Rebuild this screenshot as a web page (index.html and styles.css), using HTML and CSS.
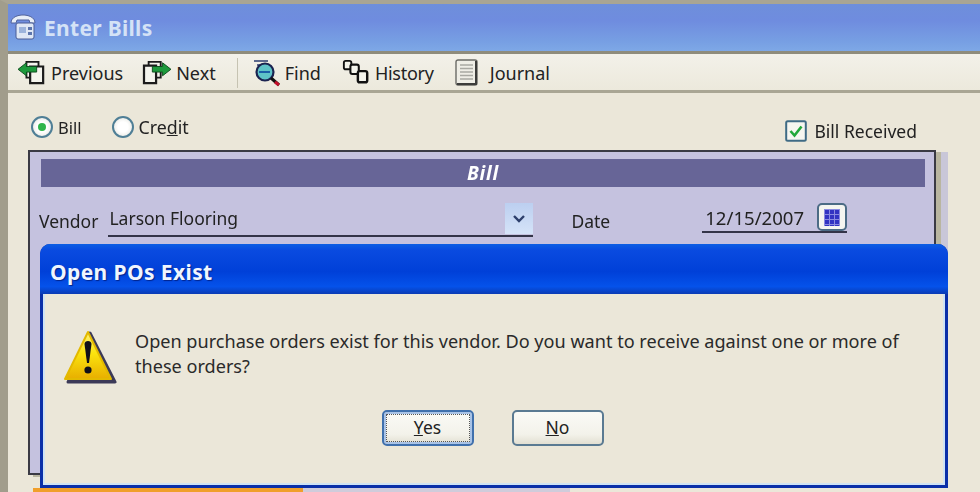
FILE: index.html
```html
<!DOCTYPE html>
<html lang="en">
<head>
<meta charset="utf-8">
<title>Enter Bills</title>
<link rel="stylesheet" href="styles.css">
</head>
<body>
<div class="window">
  <header class="titlebar">
    <svg class="title-icon" viewBox="0 0 30 30" width="30" height="30">
      <path d="M3 11 C3 5 10 3 15 3 C20 3 27 5 27 11 L22 11 L21 8 L9 8 L8 11 Z" fill="#e8eef8" stroke="#51639c" stroke-width="1"/>
      <rect x="8" y="11" width="18" height="16" rx="2" fill="#dfe7f5" stroke="#4a5c96"/>
      <rect x="11" y="15" width="7" height="6" fill="#9db4dc"/>
      <rect x="20" y="15" width="4" height="3" fill="#5c74ac"/>
      <rect x="20" y="20" width="4" height="3" fill="#5c74ac"/>
    </svg>
    <span class="title-text">Enter Bills</span>
  </header>
  <nav class="toolbar">
    <div class="tool tool-prev">
      <svg viewBox="0 0 32 28" width="30" height="26">
        <path d="M10 2 H23 V19 H10 Z" fill="#f5f5ee" stroke="#1c1c1c" stroke-width="2"/>
        <path d="M14 7 H28 V25 H14 Z" fill="#f5f5ee" stroke="#1c1c1c" stroke-width="2.4"/>
        <path d="M1 10 L10 3 V7 H21 V13 H10 V17 Z" fill="#1d9a3c" stroke="#0c4a1c" stroke-width="1"/>
      </svg>
      <span>Previous</span>
    </div>
    <div class="tool tool-next">
      <svg viewBox="0 0 32 28" width="30" height="26">
        <path d="M7 2 H20 V19 H7 Z" fill="#f5f5ee" stroke="#1c1c1c" stroke-width="2"/>
        <path d="M2 6 H15 V25 H2 Z" fill="#f5f5ee" stroke="#1c1c1c" stroke-width="2.4"/>
        <path d="M31 10 L22 3 V7 H11 V13 H22 V17 Z" fill="#1d9a3c" stroke="#0c4a1c" stroke-width="1"/>
      </svg>
      <span>Next</span>
    </div>
    <div class="tool-sep"></div>
    <div class="tool tool-find">
      <svg viewBox="0 0 30 30" width="30" height="30">
        <path d="M2 3 H16 M5 7 H12" stroke="#2b3c70" stroke-width="1.5"/>
        <circle cx="13" cy="14" r="8.5" fill="#5fc3c8" stroke="#1b2350" stroke-width="2.2"/>
        <path d="M7 14 H18" stroke="#1b5fa8" stroke-width="2"/>
        <path d="M19 20 L27 27" stroke="#111" stroke-width="3"/>
        <path d="M23 24 L27 27" stroke="#c4102a" stroke-width="3"/>
      </svg>
      <span>Find</span>
    </div>
    <div class="tool tool-history">
      <svg viewBox="0 0 30 30" width="28" height="28">
        <rect x="2" y="2" width="8" height="9" rx="2" fill="#f4f4ec" stroke="#111" stroke-width="2"/>
        <rect x="9" y="6" width="9" height="10" rx="2" fill="#f4f4ec" stroke="#111" stroke-width="2.2"/>
        <rect x="17" y="13" width="10" height="12" rx="2" fill="#f4f4ec" stroke="#111" stroke-width="2.6"/>
      </svg>
      <span>History</span>
    </div>
    <div class="tool tool-journal">
      <svg viewBox="0 0 24 28" width="24" height="28">
        <rect x="1" y="1" width="21" height="25" rx="2" fill="#efeee6" stroke="#6b6b66" stroke-width="1.4"/>
        <path d="M21 2 V25 H2" fill="none" stroke="#3c3c3a" stroke-width="2"/>
        <path d="M5 6 H18 M5 9.5 H18 M5 13 H18 M5 16.5 H18 M5 20 H18" stroke="#a9a9a2" stroke-width="1.5"/>
      </svg>
      <span>Journal</span>
    </div>
  </nav>
  <main class="content">
    <div class="options">
      <label class="radio radio-on"><span class="radio-dot"></span><span>Bill</span></label>
      <label class="radio"><span class="radio-dot"></span><span class="credit">Cre<u>d</u>it</span></label>
      <label class="received">
        <svg viewBox="0 0 22 22" width="22" height="22">
          <rect x="1.2" y="1.2" width="19.6" height="19.6" rx="1.5" fill="#f6f6f0" stroke="#3f6b85" stroke-width="2"/>
          <path d="M5.5 11 L9.5 15.5 L16.5 6.5" fill="none" stroke="#22a83a" stroke-width="2.6"/>
        </svg>
        <span>Bill Received</span>
      </label>
    </div>
    <section class="panel">
      <h2 class="panel-head">Bill</h2>
      <div class="fields">
        <span class="vendor-label">Vendor</span>
        <div class="vendor-field">
          <span>Larson Flooring</span>
          <span class="dropdown">
            <svg viewBox="0 0 14 10" width="14" height="10"><path d="M2 2 L7 7 L12 2" fill="none" stroke="#2d3f6c" stroke-width="2.4"/></svg>
          </span>
        </div>
        <span class="date-label">Date</span>
        <div class="date-field">
          <span>12/15/2007</span>
          <span class="calendar"><span class="calendar-grid"></span></span>
        </div>
      </div>
    </section>
    <div class="task-strip"></div>
  </main>
  <section class="dialog">
    <h1 class="dialog-title">Open POs Exist</h1>
    <div class="dialog-body">
      <div class="message">
        <svg class="warning" viewBox="0 0 54 56" width="54" height="56">
          <defs>
            <linearGradient id="warnFill" x1="0" y1="0" x2="0" y2="1">
              <stop offset="0" stop-color="#fff27a"/>
              <stop offset="0.45" stop-color="#fbe40e"/>
              <stop offset="1" stop-color="#e8ae00"/>
            </linearGradient>
          </defs>
          <path d="M27 3 L52 52 H5 Z" fill="#3c3a58" stroke="#3c3a58" stroke-width="3" stroke-linejoin="round"/>
          <path d="M25 2 L48 49 H2 Z" fill="url(#warnFill)" stroke="#e3b900" stroke-width="2" stroke-linejoin="round"/>
          <path d="M21.5 14 C21.5 10 28.5 10 28.5 14 L26 33 H24 Z" fill="#10101a"/>
          <circle cx="25" cy="40" r="3.6" fill="#10101a"/>
        </svg>
        <p>Open purchase orders exist for this vendor. Do you want to receive against one or more of these orders?</p>
      </div>
      <div class="actions">
        <button class="btn btn-default" type="button"><u>Y</u>es</button>
        <button class="btn" type="button"><u>N</u>o</button>
      </div>
    </div>
  </section>
</div>
</body>
</html>
```

FILE: styles.css
```css
* { box-sizing: border-box; }
html, body { margin: 0; padding: 0; }
body { width: 980px; height: 492px; overflow: hidden; background: #ebe7d9; font-family: "Noto Sans", "Open Sans", sans-serif; color: #222; }

.window { position: relative; width: 980px; height: 492px; overflow: hidden; display: flex; flex-direction: column; border-top: 4px solid #a9a593; border-left: 8px solid #a19d8c; filter: blur(0.65px); }

.titlebar { height: 50px; flex: none; display: flex; align-items: center; gap: 6px; background: linear-gradient(#6e8fdb 0%, #6f8cdf 35%, #779fe3 80%, #7ea8e6 100%); border-bottom: 3px solid #8f8c7c; }
.title-icon { margin-top: -2px; }
.title-text { font-size: 21px; font-weight: 700; color: #d4e2f6; letter-spacing: 0.3px; }

.toolbar { height: 39px; flex: none; display: flex; align-items: center; background: linear-gradient(#f3f1e9, #ece9dc); border-bottom: 3px solid #a9a694; padding: 1px 0 0 9px; font-size: 18px; color: #222; }
.tool { display: flex; align-items: center; gap: 4px; }
.tool-next { margin-left: 19px; }
.tool-sep { width: 1px; height: 30px; background: #c6c3b2; margin: 0 14px 0 21px; }
.tool-find { gap: 3px; }
.tool-history { margin-left: 21px; gap: 5px; }
.tool-history span { letter-spacing: -0.25px; }
.tool-journal { margin-left: 21px; gap: 11px; }

.content { flex: 1; position: relative; display: flex; flex-direction: column; padding-left: 20px; }
.options { height: 57px; width: 889px; flex: none; display: flex; align-items: flex-start; padding: 21px 0 0 1px; font-size: 16.5px; }
.radio { display: flex; align-items: center; gap: 5px; height: 26px; margin-right: 30px; }
.credit { font-size: 17.8px; }
.radio-dot { width: 22px; height: 22px; border-radius: 50%; border: 2px solid #4f7f96; background: radial-gradient(#fff 40%, #e0e0d8); display: flex; align-items: center; justify-content: center; }
.radio-on .radio-dot::after { content: ""; width: 8px; height: 8px; border-radius: 50%; background: #2fb54a; }
.radio-on { margin-left: 2px; }
.received { margin-left: auto; margin-top: 4px; display: flex; align-items: center; gap: 7px; height: 26px; font-size: 17.5px; }

.panel { width: 908px; height: 325px; flex: none; background: #c5c2df; border: 2px solid #3a3a44; padding: 7px 0 0 11px; box-shadow: 5px 2px 0 #b9b6a0, 12px 2px 0 #c9c7d8, 12px 12px 0 #c9c7d8; }
.panel-head { margin: 0; height: 28px; width: 884px; padding-top: 1px; background: #676597; color: #fff; font-size: 19px; font-weight: 700; font-style: italic; text-align: center; line-height: 27px; letter-spacing: 0.8px; }
.fields { display: flex; align-items: flex-start; padding-top: 15px; font-size: 17.5px; }
.vendor-label { margin: 7px 10px 0 -2px; }
.vendor-field { width: 425px; height: 35px; display: flex; justify-content: space-between; border-bottom: 2px solid #343448; padding: 4px 0 0 1px; }
.dropdown { width: 28px; height: 31px; margin-top: -3px; display: flex; align-items: center; justify-content: center; background: linear-gradient(#bccff0, #d5e3f8); }
.date-label { margin: 7px 0 0 38px; }
.date-field { width: 145px; height: 31px; margin-left: 92px; display: flex; justify-content: space-between; border-bottom: 2px solid #343448; padding: 3px 0 0 3px; font-size: 18.6px; }
.calendar { width: 30px; height: 28px; border: 2px solid #4c6b85; border-radius: 5px; background: #f5f5f0; display: flex; align-items: center; justify-content: center; margin-top: -2px; }
.calendar-grid { width: 16px; height: 17px; background: #3233c2; background-image: linear-gradient(#8a8ae0 1px, transparent 1px), linear-gradient(90deg, #8a8ae0 1px, transparent 1px); background-size: 5px 5px; }
.task-strip { height: 4px; width: 537px; margin: auto 0 0 5px; flex: none; background: linear-gradient(90deg, #f09f2b 0 270px, #cfccdb 270px); }

.dialog { position: absolute; left: 32px; top: 240px; width: 908px; height: 244px; display: flex; flex-direction: column; background: #0a2fc4; border-radius: 10px 10px 0 0; border: 3px solid #0a2fa8; border-top: 0; }
.dialog-title { height: 50px; flex: none; padding: 10px 0 0 10px; color: #f0f6ff; font-size: 21px; font-weight: 700; line-height: 36px; letter-spacing: 0.4px; text-shadow: 1px 1px 1px #00238c; background: linear-gradient(#0d5fe4 0%, #0a4be0 12%, #0040d8 55%, #0552ea 85%, #0a3bb4 100%); border-radius: 10px 10px 0 0; margin: 0 -3px; }
.dialog-body { flex: 1; background: #ebe7d9; border: 2px solid #cfe3f4; border-top: 0; display: flex; flex-direction: column; }
.message { display: flex; align-items: flex-start; padding: 35px 30px 0 18px; font-size: 18.1px; line-height: 25px; color: #2a2a2a; }
.warning { flex: none; margin-top: 1px; margin-right: 18px; }
.message p { margin: 0; width: 790px; }
.actions { display: flex; justify-content: center; gap: 38px; margin-top: 24px; padding-right: 3px; }
.btn { width: 92px; height: 36px; padding: 0 0 3px; border: 2px solid #5a7a92; border-radius: 5px; background: linear-gradient(#fafaf6, #f3f2ea 70%, #e2dfd2); font: 17.5px "Noto Sans", sans-serif; color: #222; }
.btn-default { border-color: #3f70ad; outline: 1px dotted #555; outline-offset: -5px; box-shadow: inset 0 0 0 2px #a9c3e6; }
```
